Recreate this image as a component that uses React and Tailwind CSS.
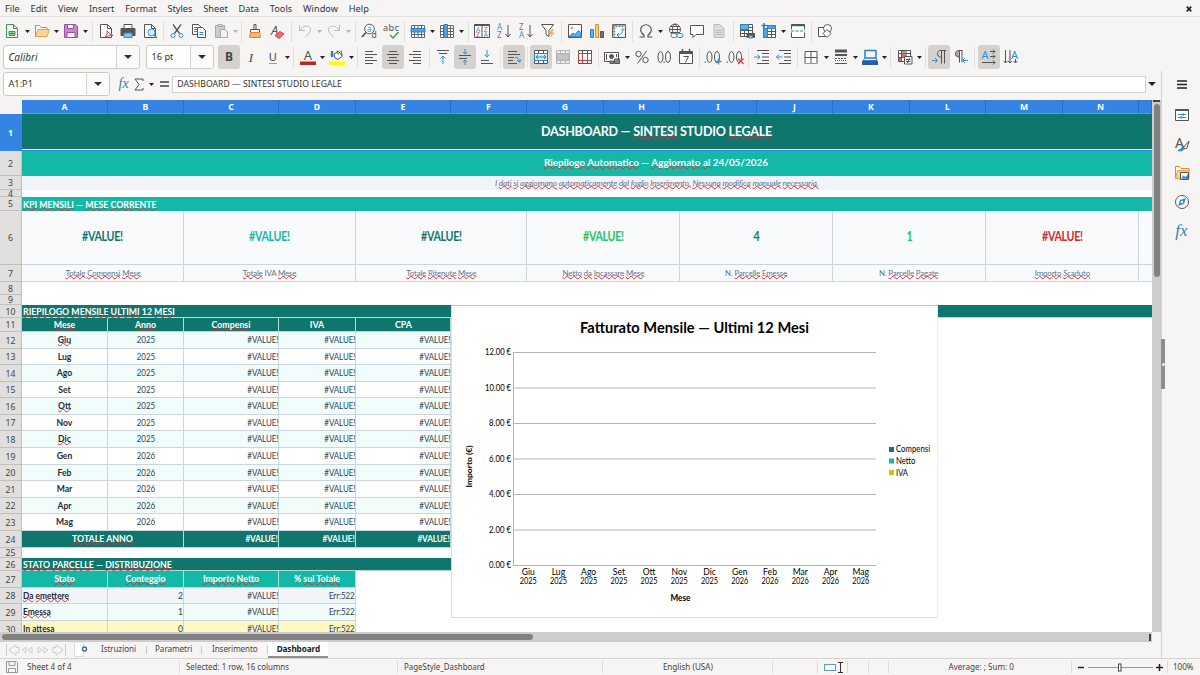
import clsx from 'clsx';

const COLS = [
  ['A', 'w-[86px]'], ['B', 'w-[76px]'], ['C', 'w-[95px]'], ['D', 'w-[77px]'], ['E', 'w-[95px]'],
  ['F', 'w-[76px]'], ['G', 'w-[77px]'], ['H', 'w-[76px]'], ['I', 'w-[77px]'], ['J', 'w-[76px]'],
  ['K', 'w-[77px]'], ['L', 'w-[76px]'], ['M', 'w-[77px]'], ['N', 'w-[76px]'], ['', 'w-[13px]'],
];

const MENUS = ['File', 'Edit', 'View', 'Insert', 'Format', 'Styles', 'Sheet', 'Data', 'Tools', 'Window', 'Help'];

const MONTHS = [
  ['Giu', 2025, 'h-[17px]', true], ['Lug', 2025, 'h-[16px]'], ['Ago', 2025, 'h-[17px]'], ['Set', 2025, 'h-[16px]'],
  ['Ott', 2025, 'h-[17px]', true], ['Nov', 2025, 'h-[16px]'], ['Dic', 2025, 'h-[17px]', true], ['Gen', 2026, 'h-[17px]'],
  ['Feb', 2026, 'h-[16px]'], ['Mar', 2026, 'h-[17px]'], ['Apr', 2026, 'h-[16px]'], ['Mag', 2026, 'h-[17px]'],
];

const KPIS = [
  ['#VALUE!', 'text-[#0f766e]', 'w-[162px]', '', ['Totale', 'Compensi', 'Mese']],
  ['#VALUE!', 'text-[#14b8a6]', 'w-[172px]', '', ['Totale', 'IVA', 'Mese']],
  ['#VALUE!', 'text-[#0f766e]', 'w-[171px]', '', ['Totale', 'Ritenute', 'Mese']],
  ['#VALUE!', 'text-[#22c55e]', 'w-[153px]', '', ['Netto', 'da', 'Incassare', 'Mese']],
  ['4', 'text-[#0f766e]', 'w-[153px]', 'N. ', ['Parcelle', 'Emesse']],
  ['1', 'text-[#22c55e]', 'w-[153px]', 'N. ', ['Parcelle', 'Pagate']],
  ['#VALUE!', 'text-[#dc2626]', 'w-[153px]', '', ['Importo', 'Scaduto']],
];

/* ---------- icons ---------- */

function Ico({ children, w = 16, stroke = '#555' }) {
  return (
    <svg width={w} height="16" viewBox={`0 0 ${w} 16`} fill="none" stroke={stroke} strokeWidth="1" className="shrink-0 overflow-visible">
      {children}
    </svg>
  );
}

function Letter({ x, y, size = 8, fill = '#555', children, ...rest }) {
  return (
    <text x={x} y={y} fontSize={size} fill={fill} stroke="none" fontFamily="Noto Sans, sans-serif" {...rest}>
      {children}
    </text>
  );
}

const Page = ({ stroke = '#555', fill = '#fff' }) => (
  <path d="M2.5 1.5h7l4 4v9h-11zM9.500 1.500v4h4" stroke={stroke} fill={fill} />
);

const NewDoc = () => (
  <Ico>
    <Page stroke="#3a9a4a" />
    <path d="M5 8.500h6v4H5zM5 10.500h6M8 8.500v4" stroke="#3a9a4a" fill="#a9dcb0" />
  </Ico>
);
const Open = () => (
  <Ico>
    <path d="M1.500 13.500v-11h4l1.500 2h6v2" stroke="#e08a2c" fill="#fff" />
    <path d="M1.500 13.500l2.500-7h11.500l-2.500 7z" stroke="#e9a04e" fill="#fbd39b" />
  </Ico>
);
const Save = () => (
  <Ico>
    <path d="M1.500 1.500h11l2 2v11h-13z" stroke="#9b4fa5" fill="#c983d2" />
    <path d="M4.500 1.500h6v4h-6zM4 9.500h8v5H4z" stroke="#9b4fa5" fill="#fff" />
  </Ico>
);
const Pdf = () => (
  <Ico>
    <Page />
    <path d="M7 14.500c2-2 2.500-5 2-6.500s2 4 6 4.500c-3-.5-6 .5-8 2z" stroke="#e03b45" />
  </Ico>
);
const Print = () => (
  <Ico>
    <path d="M4 5.500v-4h8v4" fill="#fff" />
    <path d="M1 5.500h14v7H1z" fill="#555" />
    <path d="M4 10h8v4.500H4z" fill="#8ec3ea" stroke="#3a86c4" />
  </Ico>
);
const Preview = () => (
  <Ico>
    <Page />
    <circle cx="9.500" cy="9.500" r="3.500" stroke="#2f8fd8" fill="#d7ecfb" />
    <path d="M12 12l3 3" stroke="#2f8fd8" strokeWidth="1.500" />
  </Ico>
);
const Cut = () => (
  <Ico>
    <path d="M4 1.500l6.500 9M12 1.500l-6.500 9" strokeWidth="1.300" />
    <circle cx="4" cy="12.500" r="2" stroke="#2f8fd8" />
    <circle cx="12" cy="12.500" r="2" stroke="#2f8fd8" />
  </Ico>
);
const Copy = () => (
  <Ico>
    <path d="M1.500 1.500h6l2 2v8h-8z" fill="#fff" />
    <path d="M6.500 4.500h5l3 3v7h-8z" fill="#fff" />
    <path d="M3 4.500h3M3 6.500h3M3 8.500h3" stroke="#2f8fd8" />
    <path d="M8.500 9.500h4M8.500 11.500h4" stroke="#2f8fd8" />
  </Ico>
);
const Paste = () => (
  <Ico stroke="#aaa">
    <path d="M2.500 2.500h9v12h-9z" fill="#ccc" />
    <path d="M5 1.500h4v2H5z" fill="#ddd" />
    <path d="M7.500 6.500h4l3 2v6h-7z" fill="#f4f4f4" />
  </Ico>
);
const Brush = () => (
  <Ico>
    <path d="M7 1.500h2v5H7zM3.500 6.500h9v3h-9z" fill="#fff" />
    <path d="M3.500 9.500h9l1 5h-11z" stroke="#e08a2c" fill="#f8b76b" />
  </Ico>
);
const ClearFmt = () => (
  <Ico>
    <Letter x="2" y="12" size="13" fontStyle="italic">A</Letter>
    <path d="M6 12.500l5-4 4 2.500-5 4.500z" stroke="#e03b45" fill="#f06b72" />
  </Ico>
);
const Undo = () => (
  <Ico stroke="#bdbdbd"><path d="M2.500 2v5.500h5.500M2.500 7.500c3-5 10-6 11-1.500 .500 3-2.500 5-5 8" /></Ico>
);
const Redo = () => (
  <Ico stroke="#bdbdbd"><path d="M13.500 2v5.500H8M13.500 7.500c-3-5-10-6-11-1.500 -.500 3 2.500 5 5 8" /></Ico>
);
const Find = () => (
  <Ico>
    <circle cx="8.500" cy="6" r="4.800" fill="#fff" />
    <path d="M5 9.500l-4 4.500" strokeWidth="1.800" />
    <Letter x="6" y="8.500" size="8" fill="#2f8fd8">a</Letter>
    <Letter x="10.500" y="15" size="8.500">d</Letter>
  </Ico>
);
const Spell = () => (
  <Ico>
    <Letter x="0" y="8" size="9" textLength="16">abc</Letter>
    <path d="M7 12l3 3 5.500-6" stroke="#2ea84a" strokeWidth="1.500" />
  </Ico>
);
const Grid = ({ stroke = '#666' }) => (
  <path d="M1.500 2.500h13v12h-13zM1.500 5.500h13M1.500 8.500h13M1.500 11.500h13M4.500 2.500v12M8 2.500v12M11.500 2.500v12" stroke={stroke} />
);
const RowIco = () => (
  <Ico><path d="M1 1h14v14H1z" fill="#fff" stroke="none" /><Grid /><path d="M1 5.500h14v3.500H1z" fill="#4fa3e3" stroke="#2f7fc4" /></Ico>
);
const ColIco = () => (
  <Ico><path d="M1 1h14v14H1z" fill="#fff" stroke="none" /><Grid /><path d="M5 1.500h3.500v13H5z" fill="#4fa3e3" stroke="#2f7fc4" /></Ico>
);
const SortBox = () => (
  <Ico>
    <path d="M.5 1.500h15v13H.5zM8 1.500v13" fill="#fff" />
    <path d="M.5 2h15" strokeWidth="2" />
    <Letter x="2" y="8.500" size="6.500" fill="#2f8fd8">A</Letter>
    <Letter x="2" y="14" size="6.500" fill="#a94fb5">Z</Letter>
    <Letter x="9.800" y="8.500" size="6.500" fill="#a94fb5">Z</Letter>
    <Letter x="9.800" y="14" size="6.500" fill="#2f8fd8">A</Letter>
  </Ico>
);
const SortAz = ({ up = 'A', down = 'Z', upFill = '#2f8fd8', downFill = '#a94fb5' }) => (
  <Ico>
    <Letter x="1" y="7.300" size="8" fill={upFill}>{up}</Letter>
    <Letter x="1" y="15" size="8" fill={downFill}>{down}</Letter>
    <path d="M12 2v12M9.500 11l2.500 3 2.500-3" />
  </Ico>
);
const Filter = () => (
  <Ico>
    <path d="M1.500 1.500h12l-4.500 6v6l-3-2v-4z" fill="#fff" />
    <path d="M12 6l-3 5h2.500l-1.500 4 4.500-5.500h-2.500l2-3.500z" fill="#f7a94a" stroke="none" />
  </Ico>
);
const ImageIco = () => (
  <Ico>
    <path d="M1.500 1.500h13v13h-13z" fill="#fff" />
    <circle cx="5" cy="5" r="1.500" fill="#f7a94a" stroke="none" />
    <path d="M2 13.500l4-3.500 2 1.500 3.500-4 2.500 3v3.500z" fill="#5fb0ea" stroke="#2f7fc4" />
  </Ico>
);
const ChartIco = () => (
  <Ico>
    <path d="M1.500 6.500h3v8h-3z" fill="#5fb0ea" stroke="#2f7fc4" />
    <path d="M6.500 1.500h3v13h-3z" fill="#fbc98a" stroke="#e08a2c" />
    <path d="M11.500 8.500h3v6h-3z" fill="#777" />
  </Ico>
);
const Pivot = () => (
  <Ico>
    <path d="M1.500 1.500h13v13h-13z" fill="#fff" />
    <path d="M1.500 3h13M3 1.500v13" strokeWidth="2.500" strokeDasharray="2 1" stroke="#888" />
    <path d="M6 12c4 0 6-2 6-6M10 7.500l2-2 2 2M8 10l-2 2 2 2" stroke="#2f8fd8" />
  </Ico>
);
const Omega = () => (
  <Ico>
    <path d="M1.500 14h4.500v-1.800C2.500 9.500 2 6.500 3.500 4 5.500 1 10.500 1 12.500 4c1.500 2.500 1 5.500-2.500 8.200V14h4.500" strokeWidth="1.200" />
  </Ico>
);
const LinkIco = () => (
  <Ico>
    <circle cx="7" cy="6.500" r="5.500" fill="#fff" />
    <path d="M1.500 6.500h11M7 1c-3.500 3-3.500 8 0 11M7 1c3.500 3 3.500 8 0 11M2.500 3.500h9M2.500 9.500h9" />
    <rect x="3" y="10.500" width="6" height="4" rx="2" stroke="#2f8fd8" fill="#fff" />
    <rect x="9" y="10.500" width="6" height="4" rx="2" stroke="#2f8fd8" fill="#fff" />
  </Ico>
);
const Comment = () => (
  <Ico><path d="M1.500 2.500h13v9H7l-3 3v-3H1.500z" fill="#fff" /></Ico>
);
const Header = () => (
  <Ico stroke="#bbb"><path d="M3 1.500h6l4 4v9H3z" fill="#dcdcdc" /><path d="M5 9.500h6M5 11.500h6M5 7.500h6" /></Ico>
);
const PrintArea = () => (
  <Ico>
    <path d="M1 1h13v12H1z" fill="#fff" stroke="none" />
    <path d="M1.500 1.500h12v12h-12zM1.500 4.500h12M1.500 7.500h12M1.500 10.500h12M5.500 1.500v12M9.500 1.500v12" />
    <path d="M1.500 1.500h8v5h-8z" fill="#5fb0ea" stroke="#2f7fc4" />
    <path d="M8 10.500h7.500v4H8z" fill="#555" />
    <path d="M10 12.500h3.500v2.500H10z" fill="#8ec3ea" stroke="#3a86c4" />
  </Ico>
);
const Freeze = () => (
  <Ico>
    <path d="M2 2h13v12H2z" fill="#fff" stroke="none" />
    <path d="M2.500 2.500h12v12h-12zM2.500 5.500h12M2.500 8.500h12M2.500 11.500h12M6.500 2.500v12M10.500 2.500v12" />
    <path d="M2.500 5.500h4v9h-4zM6.500 2.500h8v3h-8z" fill="#4fa3e3" stroke="#2f7fc4" />
    <path d="M3 0v5M.5 2.500h5" stroke="#2f7fc4" strokeWidth="1.500" />
  </Ico>
);
const Split = () => (
  <Ico>
    <path d="M1.500 6.500v-5h13v5M1.500 9.500v5h13v-5" fill="#fff" />
    <path d="M1.500 2.200h13" strokeWidth="2" />
    <path d="M1 8h14" stroke="#2f8fd8" strokeDasharray="3 1.500" />
  </Ico>
);
const Draw = () => (
  <Ico>
    <path d="M1.500 4.500h8v9h-8z" fill="#fff" />
    <circle cx="10.500" cy="5.500" r="4" fill="#fff" />
    <path d="M10 6.500l4 4-4 4-4-4z" fill="#fff" />
  </Ico>
);

const FontColor = () => (
  <Ico>
    <Letter x="3.800" y="10.500" size="13">A</Letter>
    <path d="M0 12.500h16v3.500H0z" fill="#c9211e" stroke="none" />
  </Ico>
);
const Highlight = () => (
  <Ico>
    <path d="M3 2v6" stroke="#2f7fc4" strokeWidth="2.500" />
    <path d="M5 5l4.500-2.500 4 4.500-4.500 3.500-3-1.500zM8 1.500l1.500 4M12 1.500l1 5" fill="#fff" />
    <path d="M0 12.500h16v3.500H0z" fill="#ffff00" stroke="none" />
  </Ico>
);
const AlignLeft = () => <Ico><path d="M2 2.500h8M2 5.500h12M2 8.500h8M2 11.500h12M2 14.500h8" /></Ico>;
const AlignCenter = () => <Ico><path d="M4 2.500h8M2 5.500h12M4 8.500h8M2 11.500h12M4 14.500h8" /></Ico>;
const AlignRight = () => <Ico><path d="M6 2.500h8M2 5.500h12M6 8.500h8M2 11.500h12M6 14.500h8" /></Ico>;
const VTop = () => (
  <Ico><path d="M2 1.500h12M4 4.500h8" /><path d="M8 15V7M5.500 9.500L8 7l2.500 2.500" stroke="#2f8fd8" /></Ico>
);
const VMid = () => (
  <Ico>
    <path d="M2 6.500h12M2 9.500h8" />
    <path d="M8 0v5M6 3l2 2 2-2M8 16v-5M6 13l2-2 2 2" stroke="#2f8fd8" />
  </Ico>
);
const VBot = () => (
  <Ico><path d="M2 14.500h12M2 11.500h8" /><path d="M8 1v7M5.500 5.500L8 8l2.500-2.500" stroke="#2f8fd8" /></Ico>
);
const Wrap = () => (
  <Ico>
    <path d="M2 2.500h9M2 5.500h12M2 8.500h6M2 11.500h5M2 14.500h9" />
    <path d="M9 8.500c3 0 4 1 4.500 4M11 11l2.500 2.500 1.500-3" stroke="#2f8fd8" />
  </Ico>
);
const Merge = () => (
  <Ico>
    <path d="M1.500 1.500h13v13h-13zM1.500 4.500h13M1.500 11.500h13M5.500 1.500v3M10.500 1.500v3M5.500 11.500v3M10.500 11.500v3" fill="#fff" />
    <path d="M1.500 4.500h13v7h-13z" stroke="#2f7fc4" fill="#d7ecfb" />
    <path d="M3 8h10M5 6L3 8l2 2M11 6l2 2-2 2" stroke="#2f7fc4" />
  </Ico>
);
const MergeOff = () => (
  <Ico stroke="#b4b4b4">
    <path d="M1.500 1.500h13v13h-13zM1.500 4.500h13M1.500 11.500h13M5.500 1.500v3M10.500 1.500v3M5.500 11.500v3M10.500 11.500v3" fill="#eee" />
    <path d="M2 5h12v6H2z" fill="#c4c4c4" />
  </Ico>
);
const Unmerge = () => (
  <Ico>
    <path d="M1.500 1.500h13v13h-13zM1.500 4.500h13M1.500 11.500h13M5.500 1.500v3M10.500 1.500v3" fill="#fff" />
    <path d="M1.500 4.500h13v7h-13zM5.500 4.500v10M10.500 4.500v10" stroke="#d03b3b" />
  </Ico>
);
const Currency = () => (
  <Ico>
    <path d="M.5 3.500h14v9H.5z" fill="#fff" />
    <circle cx="7.500" cy="7.500" r="2" fill="#555" />
    <path d="M2.500 5v6M12.500 5v3" />
    <path d="M10.500 10h5v4.500h-5zM6 12h3.500v2.500H6z" fill="#888" />
  </Ico>
);
const Percent = () => (
  <Ico><circle cx="4.500" cy="5" r="2.700" /><circle cx="11.500" cy="11" r="2.700" /><path d="M12.500 2l-9 12.500" /></Ico>
);
const Zeros = ({ children }) => (
  <Ico w={18}>
    <ellipse cx="5.500" cy="8" rx="2.500" ry="5.500" />
    <ellipse cx="13" cy="8" rx="2.500" ry="5.500" />
    {children}
  </Ico>
);
const Calendar = () => (
  <Ico>
    <path d="M1.500 2.500h13v12h-13z" fill="#fff" />
    <path d="M1.500 4h13" strokeWidth="2" />
    <path d="M4.500 0v3M11.500 0v3" strokeWidth="1.500" />
    <path d="M5.500 7.500h5l-3 6" />
  </Ico>
);
const Indent = () => (
  <Ico><path d="M3 1.500h12M8 4.500h7M8 8h7M8 11.500h7M3 14.500h12" /><path d="M0 8h6M3.500 5.500L6 8l-2.500 2.500" stroke="#2f8fd8" /></Ico>
);
const Outdent = () => (
  <Ico><path d="M3 1.500h12M8 4.500h7M8 8h7M8 11.500h7M3 14.500h12" /><path d="M.5 8h6M3 5.500L.5 8 3 10.500" stroke="#2f8fd8" /></Ico>
);
const Borders = () => (
  <Ico><path d="M2 14.500v-12h12v12M8 2.500v12M2 8.500h12" fill="#fff" /><path d="M2 14.500h12" stroke="#e08a2c" /></Ico>
);
const LineStyle = () => (
  <Ico>
    <path d="M2 2h12" strokeWidth="3" />
    <path d="M2 6h12" strokeWidth="2" />
    <path d="M2 9.500h12" strokeDasharray="2 1" />
    <path d="M2 11.500h12" strokeDasharray="1 1" />
    <path d="M2 14.500h12" />
  </Ico>
);
const BorderColor = () => (
  <Ico>
    <path d="M3 1.500h11v7.500H3z" stroke="#2f7fc4" strokeWidth="1.500" fill="#eaf4fc" />
    <path d="M3 9l-2 2.500h14l-1-2.500" stroke="#2f7fc4" />
    <path d="M0 12h16v4H0z" fill="#2a6099" stroke="none" />
  </Ico>
);
const CondFmt = () => (
  <Ico>
    <path d="M1.500 1.500h12v11h-12zM1.500 4.500h12M1.500 8.500h12M4.500 1.500v11M9 1.500v11" fill="#fff" />
    <path d="M5 2h4v2.500H5z" fill="#6cc27a" stroke="none" />
    <path d="M5 5h4v3.500H5z" fill="#e8656b" stroke="none" />
    <path d="M2 9h2.500v3H2z" fill="#e8656b" stroke="none" />
    <path d="M7.500 7.500h7.500v7.500H7.500zM9 10.500h4.500M9 12.500h4.500M12.500 9l-2 5" fill="#fff" />
  </Ico>
);
const Pilcrow = ({ flip }) => (
  <Ico>
    <path
      d={flip ? 'M9.500 1.500H5.500C1.500 1.500 1.500 8 5.500 8h1V1.500M6.500 8v5.500M9 1.500v12' : 'M15 1.500H9.500C5.500 1.500 5.500 8 9.500 8h1V1.500M10.500 8v6.500M13.500 1.500v13'}
      fill={flip ? '#aaa' : 'none'}
    />
    {flip
      ? <path d="M15 11.500H9.500M12 9l-2.500 2.500L12 14" stroke="#2f8fd8" />
      : <path d="M1 11.500h5.500M4 9l2.500 2.500L4 14" stroke="#2f8fd8" />}
  </Ico>
);
const TextLr = () => (
  <Ico>
    <Letter x="0.500" y="9.500" size="11" fill="#2f8fd8">A</Letter>
    <path d="M9 2.500h5M12 .5l2 2-2 2M9 7.500h5M12 5.500l2 2-2 2M1 13.500h13M12 11.500l2 2-2 2" />
  </Ico>
);
const TextTb = () => (
  <Ico>
    <Letter x="8" y="9.500" size="11" fill="#2f8fd8">A</Letter>
    <path d="M2.500 1v13M.5 12l2 2 2-2M7 1v13M5 12l2 2 2-2M12.500 10v4M10.500 12l2 2 2-2" />
  </Ico>
);

/* ---------- toolbar parts ---------- */

function Btn({ on, children }) {
  return (
    <div className={clsx('flex h-6 w-[21.95px] shrink-0 items-center justify-center rounded-[3px]', on && 'bg-[#d4d1ce]')}>
      {children}
    </div>
  );
}

function Caret({ dim }) {
  return (
    <div className="flex w-[7.35px] shrink-0 items-center justify-center">
      <svg width="5" height="3" viewBox="0 0 5 3"><path d="M0 0h5L2.500 3z" fill={dim ? '#b5b5b5' : '#222'} /></svg>
    </div>
  );
}

function Sep() {
  return (
    <div className="flex w-[5.4px] shrink-0 justify-center">
      <div className="h-[21px] w-px bg-[#e2e0de]" />
    </div>
  );
}

function Combo({ className, arrow, children }) {
  return (
    <div className={clsx('flex h-6 shrink-0 items-stretch overflow-hidden rounded-[3px] border border-[#cdc9c5] bg-white text-[9.200px]', className)}>
      <div className="flex flex-1 items-center pl-[5px]">{children}</div>
      <div className={clsx('flex items-center justify-center border-l border-[#d5d2cf] bg-[#fafafa]', arrow)}>
        <svg width="8" height="4" viewBox="0 0 8 4"><path d="M0 0h8L4 4z" fill="#2e3436" /></svg>
      </div>
    </div>
  );
}

function StandardBar() {
  return (
    <div className="flex h-[28px] items-center pl-[1.500px]">
      <Btn><NewDoc /></Btn><Caret />
      <Btn><Open /></Btn><Caret />
      <Btn><Save /></Btn><Caret />
      <Sep />
      <Btn><Pdf /></Btn><Btn><Print /></Btn><Btn><Preview /></Btn>
      <Sep />
      <Btn><Cut /></Btn><Btn><Copy /></Btn><Btn><Paste /></Btn><Caret dim />
      <Sep />
      <Btn><Brush /></Btn><Btn><ClearFmt /></Btn>
      <Sep />
      <Btn><Undo /></Btn><Caret dim /><Btn><Redo /></Btn><Caret dim />
      <Sep />
      <Btn><Find /></Btn><Btn><Spell /></Btn>
      <Sep />
      <Btn><RowIco /></Btn><Caret /><Btn><ColIco /></Btn><Caret />
      <Sep />
      <Btn><SortBox /></Btn>
      <Btn><SortAz /></Btn>
      <Btn><SortAz up="Z" down="A" upFill="#a94fb5" downFill="#2f8fd8" /></Btn>
      <Btn><Filter /></Btn>
      <Sep />
      <Btn><ImageIco /></Btn><Btn><ChartIco /></Btn><Btn><Pivot /></Btn>
      <Sep />
      <Btn><Omega /></Btn><Caret /><Btn><LinkIco /></Btn><Btn><Comment /></Btn><Btn><Header /></Btn>
      <Sep />
      <Btn><PrintArea /></Btn><Btn><Freeze /></Btn><Caret /><Btn><Split /></Btn>
      <Sep />
      <Btn><Draw /></Btn>
    </div>
  );
}

function FormatBar() {
  return (
    <div className="flex h-6 items-center pl-[2.500px]">
      <Combo className="w-[137px]" arrow="w-[23px]"><span className="text-[10px] italic">Calibri</span></Combo>
      <Combo className="ml-[6px] w-[68px]" arrow="w-[23px]">16 pt</Combo>
      <div className="w-[4.500px]" />
      <Btn on><span className="text-[12px] font-bold text-[#444]">B</span></Btn>
      <Btn><span className="font-['Liberation_Serif'] text-[13px] italic text-[#444]">I</span></Btn>
      <Btn><span className="border-b border-[#5fa8e0] text-[11px] leading-[12px] text-[#444]">U</span></Btn><Caret />
      <Sep />
      <Btn><FontColor /></Btn><Caret /><Btn><Highlight /></Btn><Caret />
      <Sep />
      <Btn><AlignLeft /></Btn><Btn on><AlignCenter /></Btn><Btn><AlignRight /></Btn>
      <Sep />
      <Btn><VTop /></Btn><Btn on><VMid /></Btn><Btn><VBot /></Btn>
      <Sep />
      <Btn on><Wrap /></Btn>
      <Sep />
      <Btn on><Merge /></Btn><Btn><MergeOff /></Btn><Btn><Unmerge /></Btn>
      <Sep />
      <Btn><Currency /></Btn><Caret />
      <Btn><Percent /></Btn>
      <Btn><Zeros><path d="M9.200 12.500v1.500" /></Zeros></Btn>
      <Btn><Calendar /></Btn>
      <Sep />
      <Btn><Zeros><path d="M1.200 12.500v1.500" /><path d="M14.500 9.500v6M11.500 12.500h6" stroke="#2f8fd8" strokeWidth="1.300" /></Zeros></Btn>
      <Btn><Zeros><path d="M1.200 12.500v1.500" /><path d="M12 9.500l5.500 5.500M17.500 9.500L12 15" stroke="#e03b45" strokeWidth="1.300" /></Zeros></Btn>
      <Sep />
      <Btn><Indent /></Btn><Btn><Outdent /></Btn>
      <Sep />
      <Btn><Borders /></Btn><Caret /><Btn><LineStyle /></Btn><Caret /><Btn><BorderColor /></Btn><Caret />
      <Sep />
      <Btn><CondFmt /></Btn><Caret />
      <Sep />
      <Btn on><Pilcrow /></Btn><Btn><Pilcrow flip /></Btn>
      <Sep />
      <Btn on><TextLr /></Btn><Btn><TextTb /></Btn>
    </div>
  );
}

function FormulaBar() {
  return (
    <div className="mt-px flex h-[24px] shrink-0 items-center pl-[2.500px]">
      <Combo className="w-[107px]" arrow="w-[23px]">A1:P1</Combo>
      <div className="ml-[9px] w-[15px] font-['Liberation_Serif'] text-[14px] italic leading-none text-[#2f7fc4]">fx</div>
      <svg width="10" height="13" viewBox="0 0 10 13" fill="none" stroke="#555">
        <path d="M9 3V1H1l4 5.500L1 12h8v-2" />
      </svg>
      <div className="ml-[4px] flex"><Caret /></div>
      <svg width="9" height="6" viewBox="0 0 9 6" className="ml-[5px]"><path d="M0 1h9M0 5h9" stroke="#444" strokeWidth="1.500" /></svg>
      <div className="ml-[3.500px] flex h-[17px] w-[974px] items-center border border-[#d5d2cf] bg-white pl-[4px] text-[8.700px]">
        DASHBOARD — SINTESI STUDIO LEGALE
      </div>
      <svg width="8" height="4" viewBox="0 0 8 4" className="ml-[2px]"><path d="M0 0h8L4 4z" fill="#222" /></svg>
    </div>
  );
}

/* ---------- sheet ---------- */

// spell-check squiggle
const Sp = ({ children }) => (
  <span className="underline decoration-[#e02b36] decoration-wavy decoration-[0.6px] underline-offset-[-1px] [text-decoration-skip-ink:none]">{children}</span>
);

function Words({ list }) {
  return list.map((word, i) => (
    <span key={i}>{i > 0 && ' '}{/^(—|12|IVA|%|I|STUDIO|DASHBOARD|24\/.*)$/.test(word) ? word : <Sp>{word}</Sp>}</span>
  ));
}

function Row({ n, h, active, children }) {
  return (
    <div className={clsx('flex shrink-0', h)}>
      <div
        className={clsx(
          'flex w-[22px] shrink-0 items-center justify-center border-r border-b pt-[2px] text-[8.700px] leading-none',
          active ? 'border-[#3584e4] bg-[#3584e4] font-bold text-white' : 'border-[#c2c0be] bg-[#e1dfde] text-[#444]',
        )}
      >
        {n}
      </div>
      <div className="flex flex-1 font-[Lato,sans-serif]">{children}</div>
    </div>
  );
}

const CELL = 'flex shrink-0 items-center border-r border-b border-[#cbd5e1] pt-[1px] text-[8.600px] leading-none';
const HEAD = 'flex shrink-0 items-center justify-center border-r border-b border-[#b9d8d5] pt-[1px] text-[8.800px] font-bold leading-none text-white';
const BAND = 'flex items-center pl-[0.5px] text-[9px] font-bold leading-none text-white';
const TIGHT = 'inline-block origin-left scale-x-[0.975] whitespace-pre';

const Err = ({ children = '#VALUE!' }) => (
  <span className="inline-block origin-right scale-x-[0.93] tracking-[-0.01em]">{children}</span>
);

function StatusRow({ n, h, bg, name, count }) {
  return (
    <Row n={n} h={h}>
      <div className={clsx(CELL, bg, 'w-[86px] pl-[0.5px] font-bold text-[#1e293b]')}>
        <span className="inline-block origin-left scale-x-[0.97] whitespace-pre"><Words list={name} /></span>
      </div>
      <div className={clsx(CELL, bg, 'w-[76px] justify-end text-[#334155]')}>{count}</div>
      <div className={clsx(CELL, bg, 'w-[95px] justify-end text-[#334155]')}><Err /></div>
      <div className={clsx(CELL, bg, 'w-[77px] justify-end text-[#334155]')}><Err>Err:522</Err></div>
    </Row>
  );
}

function Sheet() {
  return (
    <div className="relative flex h-[532px] flex-col overflow-hidden bg-white">
      <div className="flex h-[14px] shrink-0">
        <div className="w-[22px] bg-[#f5f4f2]" />
        {COLS.map(([name, w], i) => (
          <div key={i} className={clsx('flex shrink-0 items-center justify-center border-r border-b border-r-[#2b6fc4] border-b-[#6a9bd0] bg-[#3584e4] pt-[2px] text-[8.700px] font-bold leading-none text-white', w)}>
            {name}
          </div>
        ))}
      </div>

      <Row n={1} h="h-[37px]" active>
        <div className="flex flex-1 flex-col border-b border-[#3584e4]">
          <div className="flex flex-1 items-center border-b border-white bg-[#0f766e] pt-[1px] pl-[519px] text-[13.400px] font-bold leading-none tracking-[-0.02em] text-white">
            <span className="inline-block origin-left scale-x-[0.938] whitespace-pre">
              <Words list={['DASHBOARD', '—', 'SINTESI', 'STUDIO', 'LEGALE']} />
            </span>
          </div>
        </div>
      </Row>
      <Row n={2} h="h-[25px]">
        <div className="flex flex-1 items-center bg-[#14b8a6] pb-[2px] pl-[522px] text-[10.200px] font-bold leading-none text-white">
          <span className="inline-block origin-left scale-x-[0.972] whitespace-pre">
            <Words list={['Riepilogo', 'Automatico', '—', 'Aggiornato', 'al', '24/05/2026']} />
          </span>
        </div>
      </Row>
      <Row n={3} h="h-[14px]">
        <div className="flex flex-1 items-center bg-[#f1f5f9] pl-[472.500px] text-[8.500px] italic leading-none tracking-[-0.02em] text-[#64748b]">
          <span className="inline-block origin-left scale-x-[0.973] whitespace-pre">
            <Words list={['I', 'dati', 'si', 'aggiornano', 'automaticamente', 'dal', 'foglio', 'Inserimento.', 'Nessuna', 'modifica', 'manuale', 'necessaria.']} />
          </span>
        </div>
      </Row>
      <Row n={4} h="h-[7px]" />
      <Row n={5} h="h-[14px]">
        <div className={clsx(BAND, 'flex-1 bg-[#14b8a6]')}>
          <span className={TIGHT}><Words list={['KPI', 'MENSILI', '—', 'MESE', 'CORRENTE']} /></span>
        </div>
      </Row>
      <Row n={6} h="h-[54px]">
        {KPIS.map(([value, color, w], i) => (
          <div key={i} className={clsx('flex shrink-0 items-center justify-center border-r border-b border-[#cbd5e1] bg-[#f8fafc] text-[12.300px] font-bold leading-none tracking-[-0.03em]', w, color)}>
            <span className="inline-block scale-x-[0.87]">{value}</span>
          </div>
        ))}
        <div className="flex-1 border-b border-[#cbd5e1] bg-[#f8fafc]" />
      </Row>
      <Row n={7} h="h-[17px]">
        {KPIS.map(([, , w, pre, label], i) => (
          <div key={i} className={clsx('flex shrink-0 items-center justify-center border-r border-b border-[#cbd5e1] bg-[#f8fafc] text-[8.400px] leading-none tracking-[-0.02em] text-[#64748b]', w)}>
            <span className="inline-block scale-x-[0.94] whitespace-pre">{pre}<Words list={label} /></span>
          </div>
        ))}
        <div className="flex-1 border-b border-[#cbd5e1] bg-[#f8fafc]" />
      </Row>
      <Row n={8} h="h-[13px]" />
      <Row n={9} h="h-[10px]" />

      <Row n={10} h="h-[13px]">
        <div className={clsx(BAND, 'flex-1 border-b border-[#b9d8d5] bg-[#0f766e]')}>
          <span className={TIGHT}><Words list={['RIEPILOGO', 'MENSILE', 'ULTIMI', '12', 'MESI']} /></span>
        </div>
      </Row>
      <Row n={11} h="h-[14px]">
        <div className={clsx(HEAD, 'w-[86px] bg-[#0f766e]')}><Sp>Mese</Sp></div>
        <div className={clsx(HEAD, 'w-[76px] bg-[#0f766e]')}><Sp>Anno</Sp></div>
        <div className={clsx(HEAD, 'w-[95px] bg-[#0f766e]')}><Sp>Compensi</Sp></div>
        <div className={clsx(HEAD, 'w-[77px] bg-[#0f766e]')}><span className="inline-block scale-x-90 text-[9.800px]">IVA</span></div>
        <div className={clsx(HEAD, 'w-[95px] bg-[#0f766e]')}><span className="inline-block scale-x-90 text-[9.800px]">CPA</span></div>
      </Row>
      {MONTHS.map(([month, year, h, sp], i) => {
        const bg = i % 2 === 0 ? 'bg-[#f0fdfa]' : 'bg-white';
        return (
          <Row key={month} n={12 + i} h={h}>
            <div className={clsx(CELL, bg, 'w-[86px] justify-center font-bold text-[#1e293b]')}>{sp ? <Sp>{month}</Sp> : month}</div>
            <div className={clsx(CELL, bg, 'w-[76px] justify-center text-[#334155]')}>
              <span className="inline-block scale-x-[0.93]">{year}</span>
            </div>
            <div className={clsx(CELL, bg, 'w-[95px] justify-end text-[#334155]')}><Err /></div>
            <div className={clsx(CELL, bg, 'w-[77px] justify-end text-[#334155]')}><Err /></div>
            <div className={clsx(CELL, bg, 'w-[95px] justify-end text-[#334155]')}><Err /></div>
          </Row>
        );
      })}
      <Row n={24} h="h-[17px]">
        <div className={clsx(HEAD, 'w-[162px] bg-[#0f766e]')}><span className="whitespace-pre"><Words list={['TOTALE', 'ANNO']} /></span></div>
        <div className={clsx(HEAD, 'w-[95px] justify-end! bg-[#0f766e] pr-[0.5px]')}><Err /></div>
        <div className={clsx(HEAD, 'w-[77px] justify-end! bg-[#0f766e] pr-[0.5px]')}><Err /></div>
        <div className={clsx(HEAD, 'w-[95px] justify-end! bg-[#0f766e] pr-[0.5px]')}><Err /></div>
      </Row>
      <Row n={25} h="h-[10px]" />
      <Row n={26} h="h-[13px]">
        <div className={clsx(BAND, 'w-[429px] border-b border-[#b9d8d5] bg-[#0f766e]')}>
          <span className={TIGHT}><Words list={['STATO', 'PARCELLE', '—', 'DISTRIBUZIONE']} /></span>
        </div>
      </Row>
      <Row n={27} h="h-[17px]">
        <div className={clsx(HEAD, 'w-[86px] bg-[#14b8a6]')}><Sp>Stato</Sp></div>
        <div className={clsx(HEAD, 'w-[76px] bg-[#14b8a6]')}><Sp>Conteggio</Sp></div>
        <div className={clsx(HEAD, 'w-[95px] bg-[#14b8a6]')}><span className="whitespace-pre"><Words list={['Importo', 'Netto']} /></span></div>
        <div className={clsx(HEAD, 'w-[77px] bg-[#14b8a6]')}><span className="whitespace-pre"><Words list={['%', 'sul', 'Totale']} /></span></div>
      </Row>
      <StatusRow n={28} h="h-[16px]" bg="bg-[#f1f5f9]" name={['Da', 'emettere']} count={2} />
      <StatusRow n={29} h="h-[17px]" bg="bg-[#f0fdfa]" name={['Emessa']} count={1} />
      <StatusRow n={30} h="h-[17px]" bg="bg-[#fef9c3]" name={['In', 'attesa']} count={0} />

      <div className="absolute top-[205px] left-[451px]"><RevenueChart /></div>
    </div>
  );
}

function RevenueChart() {
  const ticks = [12, 10, 8, 6, 4, 2, 0];
  return (
    <svg width="487" height="313" viewBox="0 0 487 313" fontFamily="Lato, sans-serif" className="block">
      <rect x="0.500" y="0.500" width="486.500" height="312" fill="#fff" stroke="#dcdfe0" />
      <path d="M0 .5h487" stroke="#b5cbcf" />
      <text x="129" y="27.500" fontSize="14.800" fontWeight="700" textLength="229" lengthAdjust="spacingAndGlyphs">Fatturato Mensile — Ultimi 12 Mesi</text>
      {ticks.map((t, i) => {
        const y = 47.5 + i * 35.5;
        const w = t >= 10 ? 26 : 22;
        return (
          <g key={t}>
            <path d={`M62 ${y}H425`} stroke="#b3b3b3" />
            <text x={60 - w} y={y + 2.7} fontSize="9" textLength={w} lengthAdjust="spacingAndGlyphs">{`${t}.00 €`}</text>
          </g>
        );
      })}
      <path d="M62.500 47v214" stroke="#b3b3b3" />
      {MONTHS.map(([month, year], i) => {
        const x = 77.2 + i * 30.23;
        return (
          <g key={month} textAnchor="middle" fontSize="8.600">
            <text x={x} y="269.500">{month}</text>
            <text x={x} y="278.500" textLength="17" lengthAdjust="spacingAndGlyphs">{year}</text>
          </g>
        );
      })}
      <text x="219.500" y="296" fontSize="8.600" fontWeight="700" textLength="20" lengthAdjust="spacingAndGlyphs">Mese</text>
      <text transform="translate(21 182.500) rotate(-90)" fontSize="8.400" fontWeight="700" textLength="42" lengthAdjust="spacingAndGlyphs">Importo (€)</text>
      <rect x="438" y="142" width="5" height="5" fill="#0f766e" />
      <rect x="438" y="153.500" width="5" height="5" fill="#14b8a6" />
      <rect x="438" y="165" width="5" height="5" fill="#eab308" />
      <text x="445" y="147" fontSize="8.800" textLength="34" lengthAdjust="spacingAndGlyphs">Compensi</text>
      <text x="445" y="159" fontSize="8.800" textLength="19.500" lengthAdjust="spacingAndGlyphs">Netto</text>
      <text x="445" y="170.500" fontSize="8.800" textLength="12" lengthAdjust="spacingAndGlyphs">IVA</text>
    </svg>
  );
}

/* ---------- sidebar, tabs, status ---------- */

function Sidebar() {
  return (
    <div className="flex w-[39px] shrink-0 border-l border-[#d5d3d1] bg-[#f6f5f4]">
      <div className="-ml-px flex w-[4px] flex-col pt-[268px]">
        <div className="flex h-[50px] items-center justify-center bg-[#8e8e8e]"><div className="size-[3px] rounded-full bg-[#eee]" /></div>
      </div>
      <div className="flex flex-1 flex-col items-center pt-[5px] pr-[2px]">
        <svg width="10" height="17" viewBox="0 0 10 17"><path d="M0 5h10M0 8.500h10M0 12h10" stroke="#222" strokeWidth="1.500" /></svg>
        <div className="mt-[14px]">
          <Ico><path d="M1.500 2.500h13v11h-13z" fill="#fff" /><path d="M1.500 3h13" strokeWidth="2" /><path d="M4 7.500h8M4 10.500h8M9 6v3M7 9v3" stroke="#2f8fd8" /></Ico>
        </div>
        <div className="mt-[13px]">
          <Ico><Letter x="1" y="12" size="14">A</Letter><path d="M15 5l-5 6-2-1M15 5l-2 7-3 1" /><path d="M4 14.500c3 1 6 0 6-3-2-1-3 1-3.500 2z" fill="#2f8fd8" stroke="#2f7fc4" /></Ico>
        </div>
        <div className="mt-[13px]">
          <Ico>
            <path d="M1.500 13.500v-12h4l1.500 2h8v3" stroke="#e08a2c" fill="#fff" />
            <path d="M1.500 13.500l2-8h11.500v8z" stroke="#e9a04e" fill="#fbd39b" />
            <path d="M6.500 7.500h8v7h-8z" fill="#fff" /><path d="M7 13.500l2.500-3 2 1.500 2.500-3v5z" fill="#2f8fd8" stroke="none" />
          </Ico>
        </div>
        <div className="mt-[13px]">
          <Ico><circle cx="8" cy="8" r="6.500" fill="#fff" /><path d="M12 4l-2 6-6 2 2-6z" fill="#2f8fd8" stroke="none" /><circle cx="8" cy="8" r="1.200" fill="#fff" stroke="none" /></Ico>
        </div>
        <div className="mt-[12px] font-['Liberation_Serif'] text-[17px] italic leading-[17px] text-[#2f7fc4]">fx</div>
      </div>
    </div>
  );
}

function SheetTabs() {
  const div = 'h-[8px] w-px shrink-0 self-center bg-[#c9c7c5]';
  return (
    <div className="flex h-[16px] shrink-0 items-start text-[8.800px] tracking-[-0.01em] whitespace-nowrap text-[#444]">
      <svg width="62" height="14" viewBox="0 0 62 14" fill="none" stroke="#cfcdcb" className="mt-[1px] ml-[6px] shrink-0">
        <path d="M.5 1v12M10 1.500L3 7l7 5.500v-3h3v-5h-3zM20 4l-4 3 4 3zM26 4l-4 3 4 3zM32 4v6l4-3zM38 4v6l4-3zM50 1.500L57 7l-7 5.500v-3h-3v-5h3zM59.500 1v12" />
      </svg>
      <svg width="14" height="15" viewBox="0 0 14 15" fill="none" className="ml-[6px] shrink-0">
        <path d="M.5 0h9v14.500h-9z" fill="#fff" stroke="#ddd" />
        <circle cx="10.500" cy="7" r="2" fill="#fff" stroke="#3465a4" strokeWidth="1.300" />
      </svg>
      <span className="ml-[13px] w-[35px] leading-[15px]"><span className="inline-block origin-left scale-x-[0.92]">Istruzioni</span></span>
      <span className={clsx(div, 'ml-[10px]')} />
      <span className="ml-[8px] w-[37px] leading-[15px]"><span className="inline-block origin-left scale-x-[0.93]">Parametri</span></span>
      <span className={clsx(div, 'ml-[9px]')} />
      <span className="ml-[10px] w-[46px] leading-[15px]"><span className="inline-block origin-left scale-x-[0.92]">Inserimento</span></span>
      <span className={clsx(div, 'ml-[9px]')} />
      <div className="h-[16px] w-[60px] border-b-2 border-[#8f8f8f] bg-white text-center font-bold leading-[15px] text-[#222]">
        <span className="inline-block scale-x-[0.93]">Dashboard</span>
      </div>
    </div>
  );
}

function StatusBar() {
  const bar = 'h-3 w-px shrink-0 bg-[#dddbd9]';
  const label = 'inline-block origin-left scale-x-[0.93]';
  return (
    <div className="flex h-[17px] shrink-0 items-center border-t border-[#d5d3d1] text-[8.700px] whitespace-nowrap text-[#444]">
      <svg width="12" height="12" viewBox="0 0 12 12" fill="none" stroke="#999" className="ml-[6px] shrink-0">
        <path d="M.5.5h10l1 1v10H.5zM3 .5v4h6v-4M2.500 11.500v-4h7v4" />
      </svg>
      <span className="ml-[9px] w-[152px] shrink-0"><span className={label}>Sheet 4 of 4</span></span>
      <span className={bar} />
      <span className="ml-[5.5px] w-[211.5px] shrink-0"><span className="inline-block origin-left scale-x-[0.915]">Selected: 1 row, 16 columns</span></span>
      <span className={bar} />
      <span className="ml-[5.5px] w-[198.5px] shrink-0"><span className="inline-block origin-left scale-x-[0.91]">PageStyle_Dashboard</span></span>
      <span className={bar} />
      <span className="w-[169px] shrink-0 text-center"><span className="inline-block scale-x-[0.93]">English (USA)</span></span>
      <span className={bar} />
      <span className={clsx(bar, 'ml-[44px]')} />
      <span className="ml-[6px] h-[7px] w-[12px] shrink-0 border border-[#5b9dd0] bg-white" />
      <svg width="5" height="11" viewBox="0 0 5 11" className="ml-[2px] shrink-0"><path d="M0 .5h5M2.500 0v11M0 10.500h5" stroke="#333" /></svg>
      <span className={clsx(bar, 'ml-[4px]')} />
      <span className={clsx(bar, 'ml-[20px]')} />
      <span className={clsx(bar, 'ml-[19px]')} />
      <span className="w-[184px] shrink-0 text-center"><span className="inline-block scale-x-[0.93]">Average: ; Sum: 0</span></span>
      <span className={clsx(bar, '-ml-[2px]')} />
      <svg width="88" height="11" viewBox="0 0 88 11" className="ml-[5px] shrink-0">
        <path d="M1 5.500h6M79 5.500h7M82.500 2v7" stroke="#222" strokeWidth="1.500" />
        <path d="M11 5.500h65" stroke="#999" />
        <rect x="41.500" y="2" width="2.500" height="7" fill="#fff" stroke="#444" />
      </svg>
      <span className={clsx(bar, 'ml-[2px]')} />
      <span className="ml-[5px]"><span className={label}>100%</span></span>
    </div>
  );
}

export default function App() {
  return (
    <div className="flex h-[675px] w-[1200px] flex-col overflow-hidden bg-[#f6f5f4] font-['Noto_Sans',sans-serif] text-[9px] leading-none text-[#333]">
      <div className="flex h-[17px] items-center border-b border-[#e4e2e0] pt-[1px] pl-[5px]">
        <div className="flex flex-1 gap-[10.900px] text-[9.200px]">
          {MENUS.map((m) => <span key={m}>{m}</span>)}
        </div>
        <svg width="6" height="6" viewBox="0 0 6 6" className="mr-[8px]"><path d="M.7.7l4.600 4.600M5.300.7L.7 5.300" stroke="#222" strokeWidth="1.700" /></svg>
      </div>
      <StandardBar />
      <FormatBar />
      <div className="flex h-[589px] shrink-0 pt-[2px]">
        <div className="flex min-w-0 flex-1 flex-col">
          <FormulaBar />
          <div className="flex h-[536px] shrink-0 pt-[4px]">
            <div className="h-[532px] w-[1152px] shrink-0"><Sheet /></div>
            <div className="flex h-[532px] w-[9px] flex-col items-center bg-[#cdcdcd]">
              <div className="h-[2px] w-[7px] bg-[#444]" />
              <div className="mt-[2px] h-[173px] w-[6px] rounded-full bg-[#808080]" />
            </div>
          </div>
          <div className="flex h-[10px] w-[1152px] shrink-0 items-center justify-between bg-[#cdcdcd]">
            <div className="ml-[2px] h-[6px] w-[531px] rounded-full bg-[#808080]" />
            <div className="mr-[1px] h-[7px] w-[2px] bg-[#444]" />
          </div>
          <SheetTabs />
        </div>
        <Sidebar />
      </div>
      <StatusBar />
    </div>
  );
}
